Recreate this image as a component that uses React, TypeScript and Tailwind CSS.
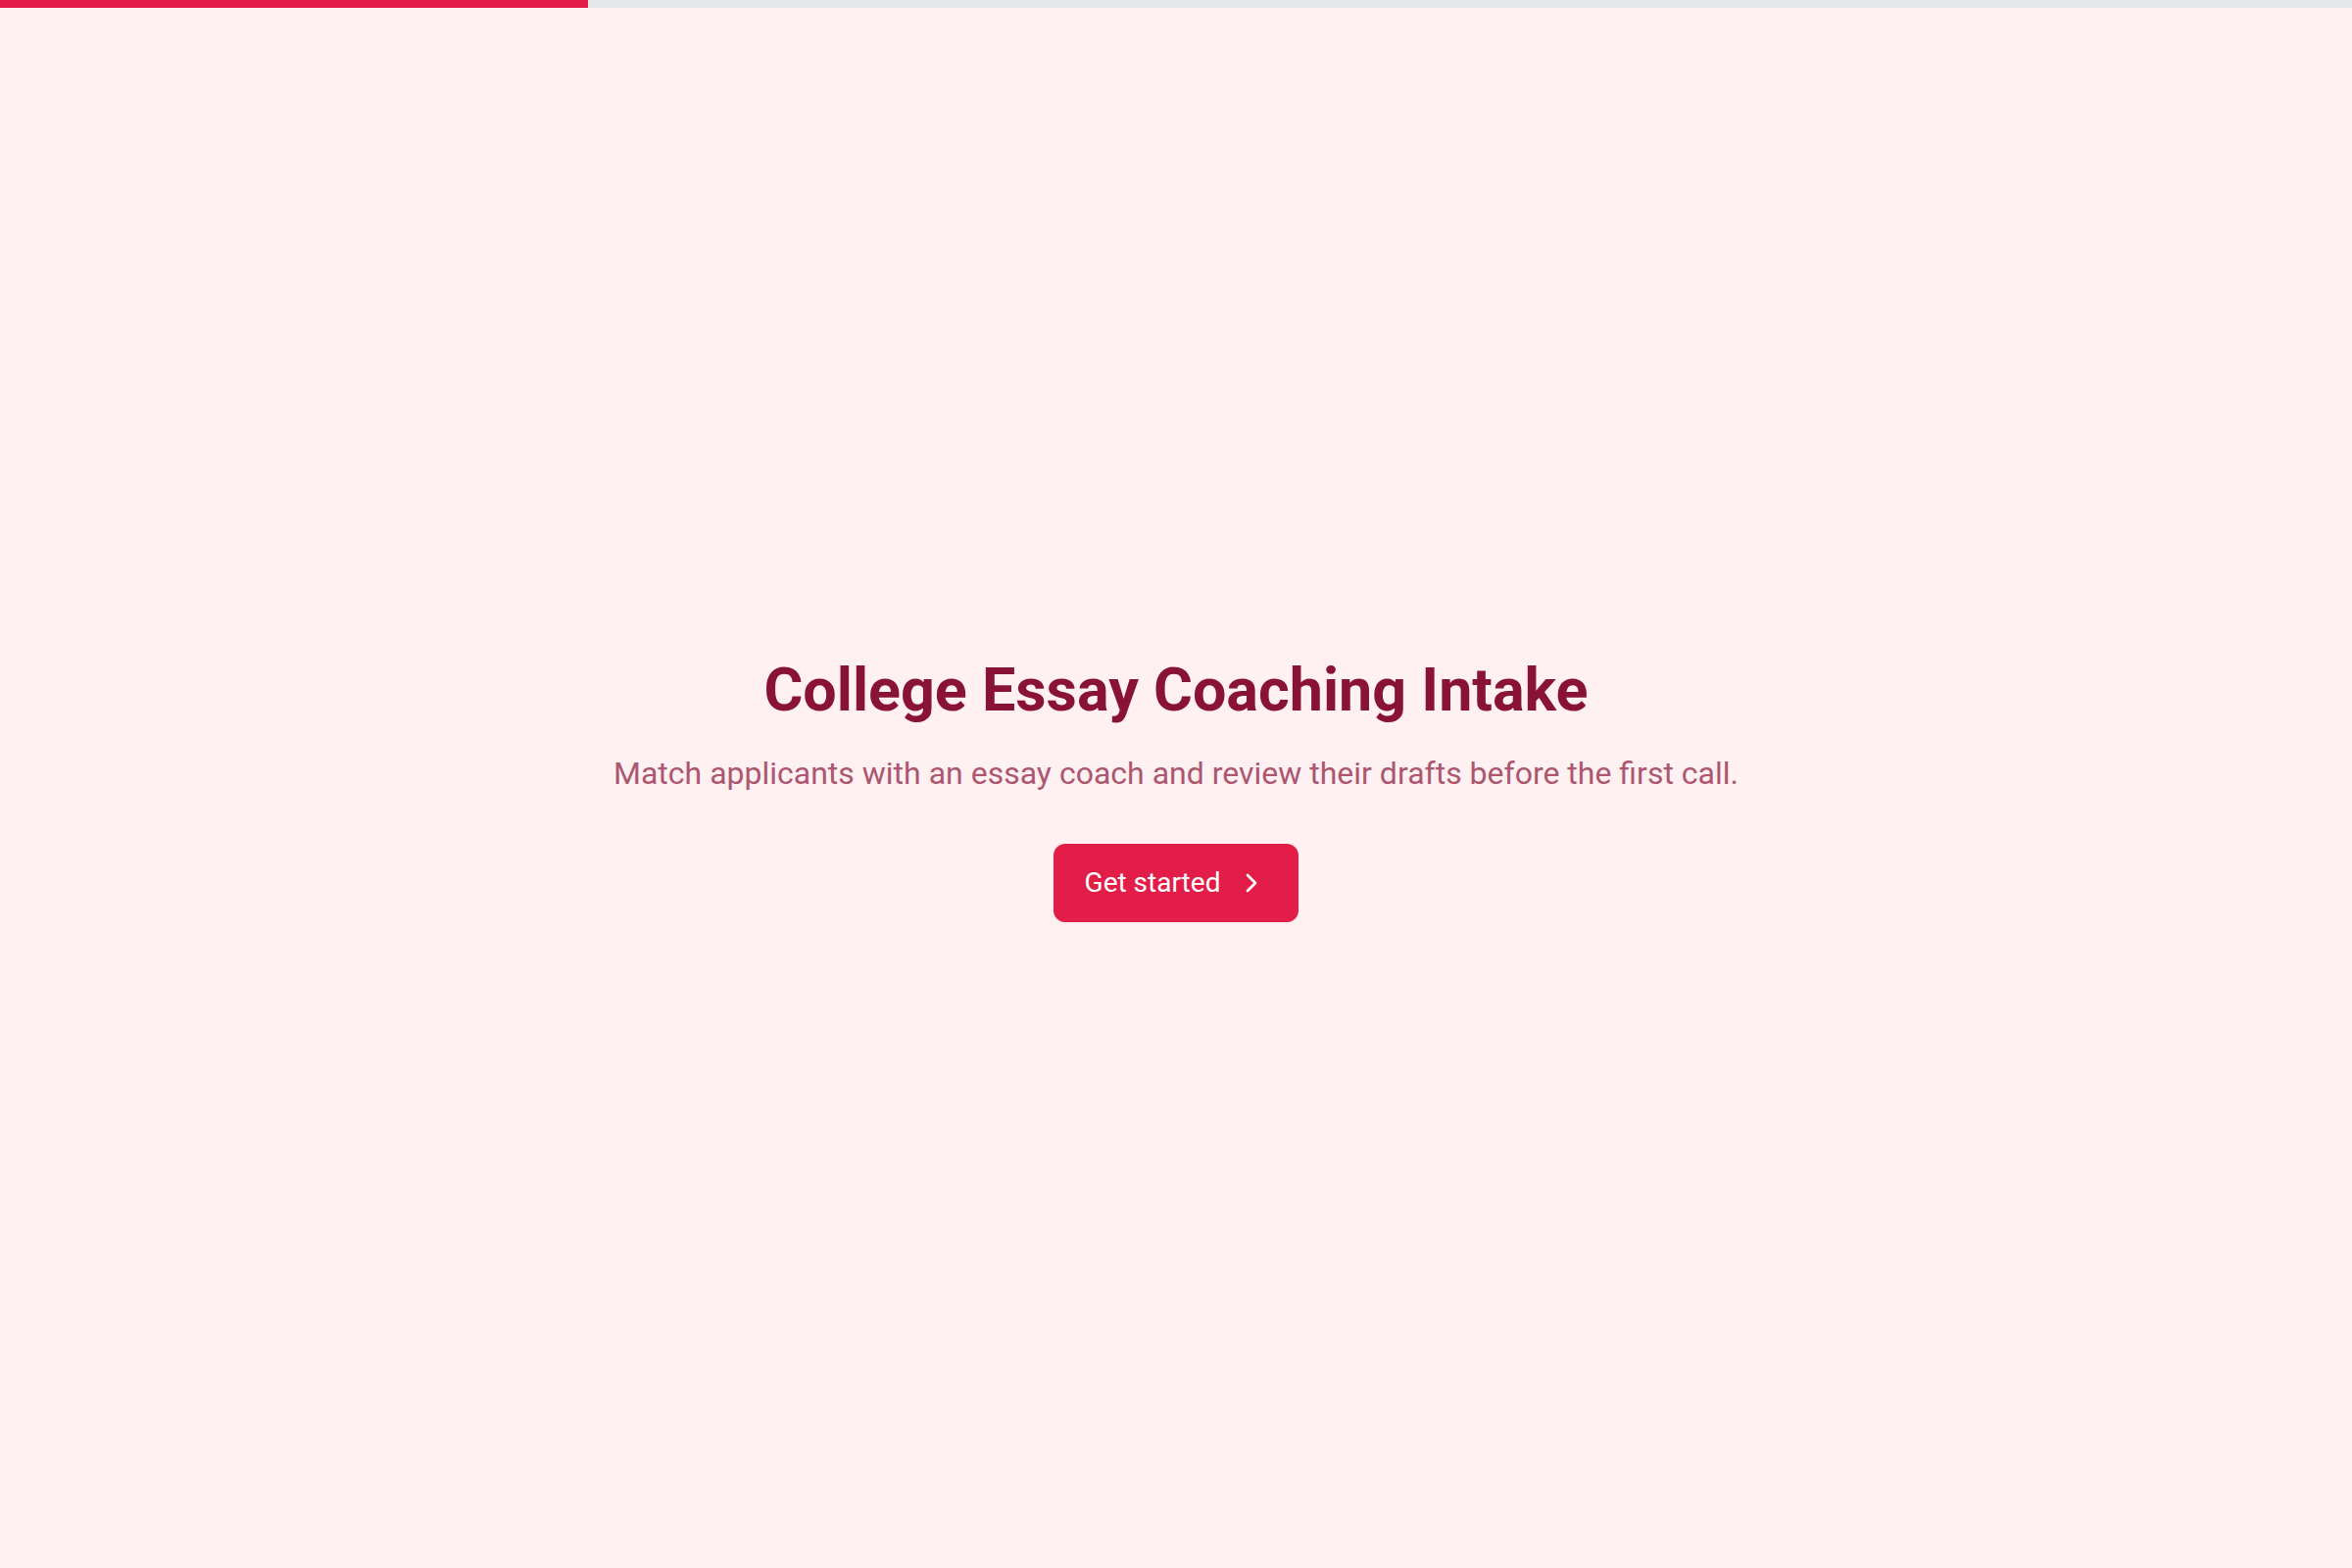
import { ChevronRight } from 'lucide-react';

export default function App() {
  return (
    <div className="flex min-h-screen flex-col bg-[#fff1f2] font-['Roboto','Liberation_Sans',sans-serif]">
      <div className="h-2 w-full bg-[#e5e7eb]">
        <div className="h-full w-1/4 bg-[#e11d48]" />
      </div>
      <main className="flex flex-1 flex-col items-center justify-center pt-1.5">
        <h1 className="text-[61px] font-bold leading-none text-[#881337]">
          College Essay Coaching Intake
        </h1>
        <p className="mt-[34px] text-[32px] leading-10 text-[#ac566f]">
          Match applicants with an essay coach and review their drafts before the first call.
        </p>
        <button className="mt-[52px] flex h-20 items-center gap-4 rounded-xl bg-[#e11d48] px-8 text-[28px] text-white">
          Get started
          <ChevronRight size={32} strokeWidth={2} />
        </button>
      </main>
    </div>
  );
}
